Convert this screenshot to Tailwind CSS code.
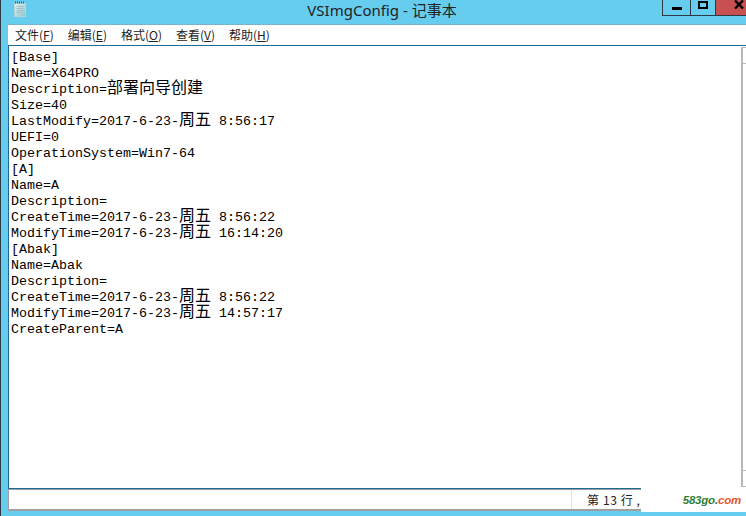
<!DOCTYPE html>
<html lang="zh">
<head>
  <meta charset="UTF-8" />
  <title>VSImgConfig - 记事本</title>
  <script src="https://cdn.jsdelivr.net/npm/@tailwindcss/browser@4"></script>
</head>
<body class="w-[746px] h-[516px] overflow-hidden bg-[#66cdef] relative">
  <div class="h-full flex flex-col border-l border-l-[#2b3a44] pl-[7px]">
    <!-- title bar -->
    <div class="h-[24px] -ml-[7px] flex items-start shrink-0">
      <svg class="ml-[12px] mt-[1px]" width="14" height="17" viewBox="0 0 14 17">
        <defs>
          <linearGradient id="paper" x1="0" y1="0" x2="1" y2="1">
            <stop offset="0" stop-color="#e4f4f4" />
            <stop offset="1" stop-color="#8fc4cc" />
          </linearGradient>
        </defs>
        <rect x="1.5" y="2.5" width="11" height="13" fill="url(#paper)" stroke="#b9d4d8" />
        <path d="M2 1.5h10" stroke="#4d5f68" stroke-width="2" stroke-dasharray="1 1" />
        <path d="M3.5 5.5h7M3.5 7.5h7M3.5 9.5h7M3.5 11.5h5" stroke="#9dc0c8" />
      </svg>
      <div class="flex-1 text-center text-[15px] leading-[20px] pr-[9px] text-[#222] font-['Noto_Sans','Noto_Sans_CJK_SC',sans-serif]">VSImgConfig - 记事本</div>
    </div>
    <!-- menu -->
    <div class="h-[21px] shrink-0 bg-white border-t border-t-[#79b3d0] flex items-center gap-[14px] pl-[7px] text-[12px] text-[#222] font-['Noto_Sans_CJK_SC',sans-serif]">
      <span>文件(<u>F</u>)</span><span>编辑(<u>E</u>)</span><span>格式(<u>O</u>)</span><span>查看(<u>V</u>)</span><span>帮助(<u>H</u>)</span>
    </div>
    <!-- text area -->
    <div class="h-[444px] shrink-0 bg-white border-t border-l border-b border-[#1f6a94] flex">
      <div class="flex-1 pl-[2px] pt-[4px] text-black text-[13.33px] leading-[16px] font-['Liberation_Mono','Noto_Sans_CJK_SC',monospace] whitespace-pre">[Base]
Name=X64PRO
Description=<span class="text-[16px] leading-[0]">部署向导创建</span>
Size=40
LastModify=2017-6-23-<span class="text-[16px] leading-[0]">周五</span> 8:56:17
UEFI=0
OperationSystem=Win7-64
[A]
Name=A
Description=
CreateTime=2017-6-23-<span class="text-[16px] leading-[0]">周五</span> 8:56:22
ModifyTime=2017-6-23-<span class="text-[16px] leading-[0]">周五</span> 16:14:20
[Abak]
Name=Abak
Description=
CreateTime=2017-6-23-<span class="text-[16px] leading-[0]">周五</span> 8:56:22
ModifyTime=2017-6-23-<span class="text-[16px] leading-[0]">周五</span> 14:57:17
CreateParent=A</div>
      <!-- scrollbar, cropped by the window edge -->
      <div class="w-[5px] mt-[1px] mb-[1px] border-l-2 border-t border-b border-[#b8b8b8] flex flex-col justify-between">
        <div class="h-[16px] border-b border-[#b8b8b8]"></div>
        <div class="h-[16px] border-t border-[#b8b8b8]"></div>
      </div>
    </div>
    <!-- status bar -->
    <div class="h-[22px] shrink-0 bg-white border-t border-l border-b-2 border-[#a0a0a0] flex pl-[562px] text-[12px] text-[#222] font-['Noto_Sans_CJK_SC',sans-serif]">
      <span class="border-l border-l-[#d7e4e8] h-full pl-[15px] flex items-center tracking-[0.6px] whitespace-pre">第 13 行 ,</span>
    </div>
  </div>
  <!-- window buttons -->
  <div class="absolute top-0 right-0 flex h-[16px] border-b border-l border-[#2b3a44]">
    <div class="w-[28px] border-r border-[#2b3a44] flex items-center justify-center"><div class="w-[10px] h-[3px] bg-black mt-[2px]"></div></div>
    <div class="w-[25px] border-r border-[#2b3a44] flex justify-center"><div class="w-[10px] h-[8px] border-2 border-black mt-[1px]"></div></div>
    <div class="w-[30px] bg-[#c75050] flex justify-end pr-[2px]">
      <svg width="10" height="9" viewBox="0 0 10 9"><path d="M1 0.5 9 8.5M9 0.5 1 8.5" stroke="#000" stroke-width="2.4" /></svg>
    </div>
  </div>
  <!-- watermark -->
  <div class="absolute left-[641px] top-[488px] w-[105px] h-[24px] bg-white text-right pr-[5px] pt-[4px] text-[11.5px] tracking-[-0.2px] font-bold italic font-['Liberation_Sans',sans-serif]"><span class="text-[#2e7d32]">583go</span><span class="text-[#555]">.</span><span class="text-[#e2562d]">com</span></div>
</body>
</html>
